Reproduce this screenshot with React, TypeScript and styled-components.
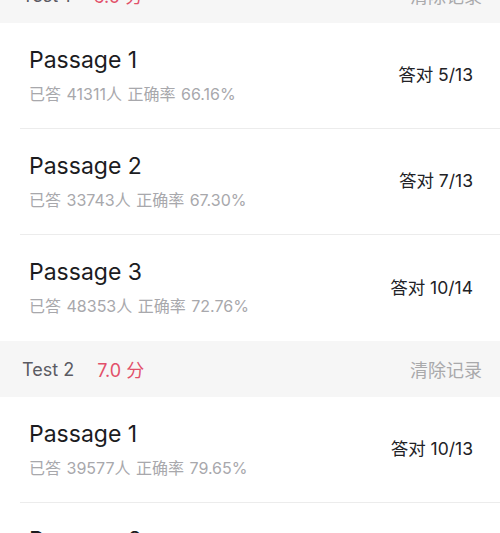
import React from 'react';
import styled, { createGlobalStyle } from 'styled-components';

const GlobalStyle = createGlobalStyle`
  html, body {
    margin: 0;
    padding: 0;
    background: #ffffff;
  }
  body {
    font-family: Inter, "Noto Sans CJK SC", "Noto Sans", sans-serif;
    -webkit-font-smoothing: antialiased;
  }
`;

interface IPassage {
  title: string;
  answered: number;
  rate: string;
  correct: number;
  total: number;
}

interface ITest {
  name: string;
  score: string;
  passages: IPassage[];
}

const tests: ITest[] = [
  {
    name: 'Test 1',
    score: '6.0',
    passages: [
      { title: 'Passage 1', answered: 41311, rate: '66.16%', correct: 5, total: 13 },
      { title: 'Passage 2', answered: 33743, rate: '67.30%', correct: 7, total: 13 },
      { title: 'Passage 3', answered: 48353, rate: '72.76%', correct: 10, total: 14 },
    ],
  },
  {
    name: 'Test 2',
    score: '7.0',
    passages: [
      { title: 'Passage 1', answered: 39577, rate: '79.65%', correct: 10, total: 13 },
      { title: 'Passage 2', answered: 36120, rate: '70.42%', correct: 9, total: 13 },
    ],
  },
];

const Page = styled.div`
  width: 500px;
  height: 533px;
  overflow: hidden;
  background: #ffffff;
`;

const List = styled.div`
  display: flex;
  flex-direction: column;
  margin-top: -33px;
`;

const SectionHeader = styled.div`
  display: flex;
  align-items: center;
  height: 56px;
  padding: 0 18px 0 22px;
  background: #f6f6f6;
  font-size: 18px;
`;

const TestName = styled.span`
  color: #5b5b63;
`;

const Score = styled.span`
  margin-left: 23px;
  color: #e2506a;
`;

const Clear = styled.span`
  margin-left: auto;
  color: #a9a9ab;
`;

const Row = styled.div`
  display: flex;
  align-items: center;
  height: 105px;
  margin-left: 20px;
  padding: 0 27px 0 9px;
  border-bottom: 1px solid #ececec;

  &:last-child {
    border-bottom: none;
    height: 106px;
  }
`;

const Info = styled.div`
  display: flex;
  flex-direction: column;
  gap: 8px;
  padding-bottom: 2px;
`;

const Title = styled.div`
  font-size: 23px;
  line-height: 30px;
  color: #1c1c1f;
`;

const Meta = styled.div`
  font-size: 16px;
  line-height: 22px;
  color: #a8a8ac;
  word-spacing: 1px;
`;

const Result = styled.div`
  margin-left: auto;
  padding-bottom: 4px;
  font-size: 17.5px;
  color: #222226;
`;

const App = (): JSX.Element => (
  <Page>
    <GlobalStyle />
    <List>
      {tests.map((test) => (
        <React.Fragment key={test.name}>
          <SectionHeader>
            <TestName>{test.name}</TestName>
            <Score>{test.score} 分</Score>
            <Clear>清除记录</Clear>
          </SectionHeader>
          <div>
            {test.passages.map((p) => (
              <Row key={p.title}>
                <Info>
                  <Title>{p.title}</Title>
                  <Meta>
                    已答 {p.answered}人 正确率 {p.rate}
                  </Meta>
                </Info>
                <Result>
                  答对 {p.correct}/{p.total}
                </Result>
              </Row>
            ))}
          </div>
        </React.Fragment>
      ))}
    </List>
  </Page>
);

export default App;
